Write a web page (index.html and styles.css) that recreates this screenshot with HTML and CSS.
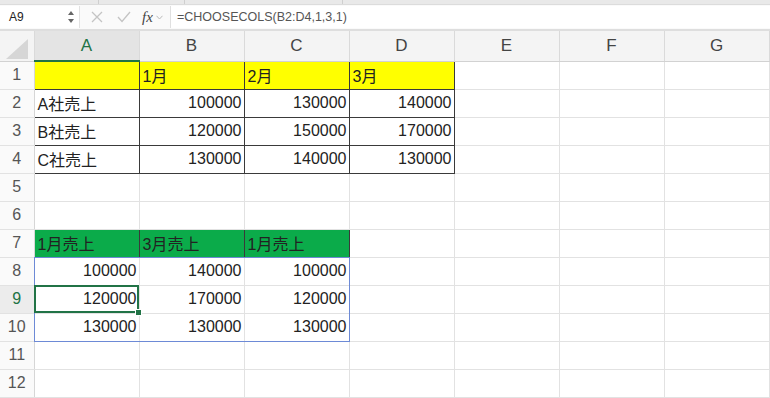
FILE: index.html
```html
<!DOCTYPE html>
<html lang="ja">
<head>
<meta charset="utf-8">
<link rel="stylesheet" href="styles.css">
</head>
<body>
<div class="app">
  <div class="topstrip"><span class="tick t1"></span><span class="tick t2"></span><span class="tick t3"></span></div>
  <div class="fbar">
    <div class="namebox">
      <span class="nb-text">A9</span>
      <span class="spin"><svg width="8" height="14" viewBox="0 0 8 14"><path d="M1 5 L4 1 L7 5 Z" fill="#666"/><path d="M1 9 L4 13 L7 9 Z" fill="#666"/></svg></span>
    </div>
    <div class="fb-icons">
      <svg class="ic-x" width="12" height="12" viewBox="0 0 12 12"><path d="M1 1 L11 11 M11 1 L1 11" stroke="#c4c4c4" stroke-width="1.3" fill="none"/></svg>
      <svg class="ic-ok" width="14" height="12" viewBox="0 0 14 12"><path d="M1 6 L5 10.5 L13 1" stroke="#c4c4c4" stroke-width="1.3" fill="none"/></svg>
      <span class="fx">fx</span>
      <svg class="ic-dd" width="7" height="5" viewBox="0 0 7 5"><path d="M0.5 0.8 L3.5 4 L6.5 0.8" stroke="#bbb" stroke-width="1" fill="none"/></svg>
    </div>
    <div class="formula">=CHOOSECOLS(B2:D4,1,3,1)</div>
  </div>
  <div class="sheet">
    <table class="grid">
      <colgroup><col class="c-rh"><col class="c-a"><col class="c-b"><col class="c-c"><col class="c-d"><col class="c-e"><col class="c-f"><col class="c-g"></colgroup>
      <thead>
        <tr class="hdr">
          <th class="corner"><svg width="30" height="26" viewBox="0 0 30 26"><path d="M28 4 L28 24 L6 24 Z" fill="#d6d6d6"/></svg></th>
          <th class="sel">A</th><th>B</th><th>C</th><th>D</th><th>E</th><th>F</th><th>G</th>
        </tr>
      </thead>
      <tbody>
        <tr><th>1</th><td class="yl bk"></td><td class="yl bk">1月</td><td class="yl bk">2月</td><td class="yl bk">3月</td><td></td><td></td><td></td></tr>
        <tr><th>2</th><td class="bk">A社売上</td><td class="bk n">100000</td><td class="bk n">130000</td><td class="bk n">140000</td><td></td><td></td><td></td></tr>
        <tr><th>3</th><td class="bk">B社売上</td><td class="bk n">120000</td><td class="bk n">150000</td><td class="bk n">170000</td><td></td><td></td><td></td></tr>
        <tr><th>4</th><td class="bk">C社売上</td><td class="bk n">130000</td><td class="bk n">140000</td><td class="bk n">130000</td><td></td><td></td><td></td></tr>
        <tr><th>5</th><td></td><td></td><td></td><td></td><td></td><td></td><td></td></tr>
        <tr><th>6</th><td></td><td></td><td></td><td></td><td></td><td></td><td></td></tr>
        <tr><th>7</th><td class="gr bk">1月売上</td><td class="gr bk">3月売上</td><td class="gr bk">1月売上</td><td></td><td></td><td></td><td></td></tr>
        <tr><th>8</th><td class="n anchor">100000<span class="spill"></span></td><td class="n">140000</td><td class="n">100000</td><td></td><td></td><td></td><td></td></tr>
        <tr><th class="rsel">9</th><td class="n cur">120000<span class="curbox"></span><span class="handle"></span></td><td class="n">170000</td><td class="n">120000</td><td></td><td></td><td></td><td></td></tr>
        <tr><th>10</th><td class="n">130000</td><td class="n">130000</td><td class="n">130000</td><td></td><td></td><td></td><td></td></tr>
        <tr><th>11</th><td></td><td></td><td></td><td></td><td></td><td></td><td></td></tr>
        <tr><th>12</th><td></td><td></td><td></td><td></td><td></td><td></td><td></td></tr>
      </tbody>
    </table>
  </div>
</div>
</body>
</html>
```
FILE: styles.css
```css
* { box-sizing: border-box; }
html, body { margin: 0; padding: 0; background: #fff; }
body { width: 770px; height: 398px; overflow: hidden; font-family: "Liberation Sans", "Noto Sans CJK JP", sans-serif; }
.app { width: 770px; }
.topstrip { height: 5px; background: #e9e9e9; position: relative; border-bottom: 1px solid #dcdcdc; }
.tick { position: absolute; top: 0; width: 1px; height: 4px; background: #cfcfcf; }
.t1 { left: 98px; } .t2 { left: 184px; } .t3 { left: 342px; }
.fbar { height: 26px; display: flex; align-items: center; background: #fafafa; border-bottom: 2px solid #dedede; }
.namebox { width: 80px; height: 22px; display: flex; align-items: center; justify-content: space-between; padding: 0 4px 0 9px; background: #fff; border-right: 1px solid #e2e2e2; }
.nb-text { font-size: 12px; color: #222; }
.spin { display: flex; align-items: center; }
.fb-icons { display: flex; align-items: center; width: 90px; padding-left: 11px; }
.ic-x { margin-right: 14px; }
.ic-ok { margin-right: 11px; }
.fx { font-family: "Liberation Serif", serif; font-style: italic; font-size: 15px; color: #444; margin-right: 3px; }
.formula { flex: 1; height: 22px; display: flex; align-items: center; padding-left: 6px; font-size: 12.5px; color: #555; background: #fff; border-left: 1px solid #e0e0e0; }
.sheet { position: relative; }
.grid { border-collapse: collapse; table-layout: fixed; width: 769px; }
.c-rh { width: 34px; }
.c-a, .c-b, .c-c, .c-d, .c-e, .c-f, .c-g { width: 105px; }
.hdr th { height: 30px; background: #f4f4f4; font-weight: normal; font-size: 17px; color: #444; border-right: 1px solid #dadada; border-bottom: 1px solid #d2d2d2; padding: 0; }
.hdr th.sel { background: #e4e4e4; color: #217346; border-bottom: 2px solid #217346; }
.hdr th.corner { padding: 0; vertical-align: bottom; }
.hdr th.corner svg { display: block; }
tbody th { height: 28px; background: #fafafa; font-weight: normal; font-size: 16px; color: #555; border-right: 1px solid #d6d6d6; border-bottom: 1px solid #e2e2e2; padding: 0; }
tbody th.rsel { background: #ececec; color: #217346; }
td { height: 28px; border-right: 1px solid #e2e2e2; border-bottom: 1px solid #e2e2e2; font-size: 16px; color: #222; padding: 0 2px 0 3px; white-space: nowrap; overflow: visible; font-family: "Liberation Sans", "Noto Sans CJK JP", sans-serif; }
td.n { text-align: right; }
td.yl { background: #ffff00; }
td.gr { background: #0bab4a; }
td.bk { border: 1px solid #3a3a3a; }
td.anchor, td.cur { position: relative; }
.spill { position: absolute; left: -1px; top: -1px; width: 316px; height: 85px; border: 1px solid #6d8ad6; pointer-events: none; z-index: 1; }
.curbox { position: absolute; left: -1px; top: -1px; right: 0; bottom: 0; border: 2px solid #217346; pointer-events: none; z-index: 2; }
.handle { position: absolute; right: -3px; bottom: -3px; width: 5px; height: 5px; background: #217346; border: 1px solid #fff; box-sizing: content-box; z-index: 3; }
```
